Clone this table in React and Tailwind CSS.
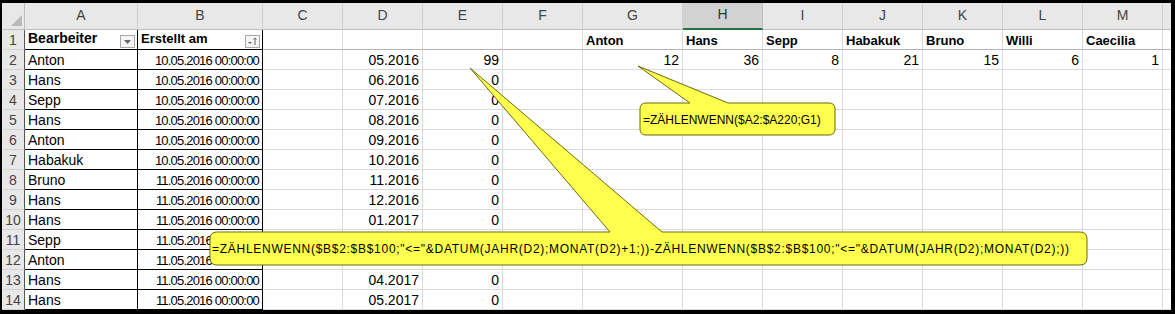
import React from 'react'

const COLS = ['A', 'B', 'C', 'D', 'E', 'F', 'G', 'H', 'I', 'J', 'K', 'L', 'M']
const NAMES = ['Anton', 'Hans', 'Sepp', 'Hans', 'Anton', 'Habakuk', 'Bruno', 'Hans', 'Hans', 'Sepp', 'Anton', 'Hans', 'Hans']
const MONTHS = ['05.2016', '06.2016', '07.2016', '08.2016', '09.2016', '10.2016', '11.2016', '12.2016', '01.2017', '02.2017', '03.2017', '04.2017', '05.2017']
const HEADS = ['Anton', 'Hans', 'Sepp', 'Habakuk', 'Bruno', 'Willi', 'Caecilia']
const COUNTS = [12, 36, 8, 21, 15, 6, 1]

const grid = 'grid grid-cols-[23px_113px_125px_80px_80px_80px_80px_100px_80px_80px_80px_80px_80px_80px_1fr]'

function FilterButton({ sorted }) {
  return (
    <div className="ml-auto mb-[1px] w-[15px] h-[13px] border border-[#a9a9a9] bg-[#f5f5f5] flex items-center justify-center">
      {sorted ? (
        <svg width="11" height="9" viewBox="0 0 11 9">
          <path d="M1 5h4l-2 2z" fill="#666" />
          <path d="M8 8V1M6.5 2.5L8 1l1.5 1.5" stroke="#666" strokeWidth="1" fill="none" />
        </svg>
      ) : (
        <svg width="7" height="4" viewBox="0 0 7 4">
          <path d="M0 0h7L3.5 4z" fill="#666" />
        </svg>
      )}
    </div>
  )
}

function Cell({ children, className = '' }) {
  return (
    <div className={`h-[20px] border-r border-b whitespace-nowrap overflow-visible px-[3px] leading-[21px] ${className}`}>
      {children}
    </div>
  )
}

function Row({ n }) {
  const i = n - 2
  const first = n === 1
  const cells = []
  cells.push(
    <div key="h" className="h-[20px] bg-[#e8e8e8] border-b border-b-[#d2d2d2] border-r border-r-[#555] text-center leading-[21px] text-[14px] text-[#444]">
      {n}
    </div>
  )
  // A
  cells.push(
    <Cell key="A" className={`border-black text-[14px] ${first ? 'font-bold text-[13px] flex items-end pr-[2px]' : ''}`}>
      {first ? (<><span>Bearbeiter</span><FilterButton /></>) : NAMES[i]}
    </Cell>
  )
  // B
  cells.push(
    <Cell key="B" className={`border-black ${first ? 'font-bold text-[13px] flex items-end pr-[2px]' : 'text-right text-[13px] tracking-[-0.8px] pr-[3px]'}`}>
      {first ? (<><span>Erstellt am</span><FilterButton sorted /></>) : `${n < 8 ? '10' : '11'}.05.2016 00:00:00`}
    </Cell>
  )
  const rowLine = first ? 'border-b-[#b4b4b4]' : ''
  cells.push(<Cell key="C" className={`border-[#dadada] ${rowLine}`} />)
  cells.push(
    <Cell key="D" className={`border-[#dadada] ${rowLine} text-right text-[14px]`}>
      {first ? '' : MONTHS[i]}
    </Cell>
  )
  cells.push(
    <Cell key="E" className={`border-[#dadada] ${rowLine} text-right text-[14px]`}>
      {first ? '' : n === 2 ? 99 : 0}
    </Cell>
  )
  cells.push(<Cell key="F" className={`border-[#dadada] ${rowLine}`} />)
  HEADS.forEach((h, k) => {
    cells.push(
      <Cell key={h + k} className={`border-[#dadada] ${rowLine} ${first ? 'font-bold text-[13px]' : 'text-right text-[14px]'}`}>
        {first ? h : n === 2 ? COUNTS[k] : ''}
      </Cell>
    )
  })
  cells.push(<Cell key="z" className={`border-r-0 border-[#dadada] ${rowLine}`} />)
  return cells
}

function Callouts() {
  const p1 = 'M644 100 L688 100 L636 63 L726 100 L827 100 Q833 100 833 106 L833 126 Q833 132 827 132 L644 132 Q638 132 638 126 L638 106 Q638 100 644 100 Z'
  const p2 = 'M215 229 L608 229 L468 65 L660 229 L1078 229 Q1085 229 1085 236 L1085 255 Q1085 262 1078 262 L215 262 Q208 262 208 255 L208 236 Q208 229 215 229 Z'
  return (
    <>
      <svg className="absolute left-0 top-0 pointer-events-none" width="1169" height="307" viewBox="0 0 1169 307">
        <path d={p1} fill="#ffff4d" stroke="#6b6b10" strokeWidth="1" />
        <path d={p2} fill="#ffff4d" stroke="#6b6b10" strokeWidth="1" />
      </svg>
      <div className="absolute left-[641px] top-[109px] text-[12px] leading-[16px] text-black">=ZÄHLENWENN($A2:$A220;G1)</div>
      <div className="absolute left-[210px] top-[238px] text-[12px] leading-[16px] text-black whitespace-nowrap tracking-[0.72px]">
        =ZÄHLENWENN($B$2:$B$100;"&lt;="&amp;DATUM(JAHR(D2);MONAT(D2)+1;))-ZÄHLENWENN($B$2:$B$100;"&lt;="&amp;DATUM(JAHR(D2);MONAT(D2);))
      </div>
    </>
  )
}

export default function App() {
  const rows = Array.from({ length: 14 }, (_, k) => k + 1)
  return (
    <div className="w-[1175px] h-[314px] bg-black pt-[3px] pl-[2px] pr-[4px] pb-[4px] font-['Liberation_Sans',Arial,sans-serif] text-black">
      <div className="relative w-full h-full bg-white overflow-hidden">
        <div className={grid}>
          <div className="h-[27px] bg-[#e8e8e8] border-r border-b border-[#bdbdbd] relative">
            <svg className="absolute right-[2px] bottom-[3px]" width="11" height="11" viewBox="0 0 11 11">
              <path d="M11 0V11H0z" fill="#b9b9b9" />
            </svg>
          </div>
          {COLS.map((c) => (
            <div
              key={c}
              className={`h-[27px] border-r flex items-end justify-center pb-[3px] text-[14px] ${
                c === 'H'
                  ? 'bg-[#d2d2d2] border-r-[#bdbdbd] border-b-2 border-b-[#217346] text-[#333]'
                  : 'bg-[#e8e8e8] border-[#d0d0d0] border-b border-b-[#bdbdbd] text-[#444]'
              }`}
            >
              {c}
            </div>
          ))}
          <div className="h-[27px] bg-[#e8e8e8] border-b border-[#bdbdbd]" />
          {rows.map((n) => (
            <Row key={n} n={n} />
          ))}
        </div>
        <Callouts />
      </div>
    </div>
  )
}
